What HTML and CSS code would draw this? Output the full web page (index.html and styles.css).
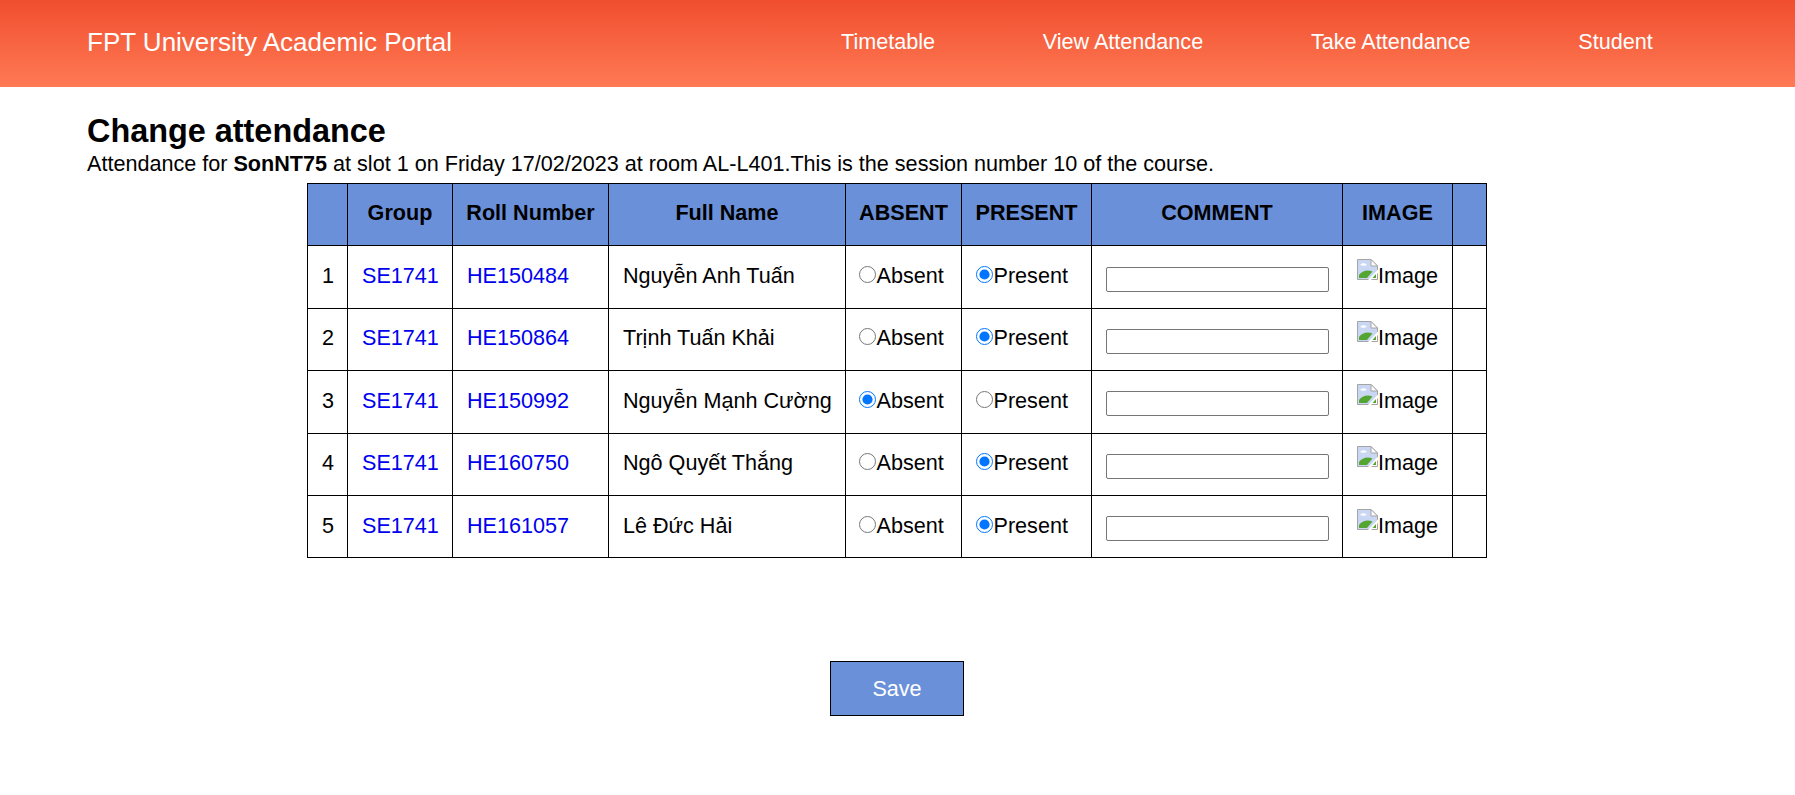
FILE: index.html
```html
<!DOCTYPE html>
<html lang="vi">
<head>
    <meta charset="UTF-8">
    <title>Change attendance</title>
    <link rel="stylesheet" href="styles.css">
</head>
<body>
    <svg class="sprite" width="0" height="0">
        <symbol id="broken" viewBox="0 0 21 21">
            <path d="M0.5 0.5H14L20.5 7V12L15 20.5H0.5Z" fill="#c9d7f4" stroke="#a4a4a4"/>
            <path d="M14 0.5V7H20.5Z" fill="#fff" stroke="#a4a4a4"/>
            <path d="M3 6C5 3.5 8 3.5 10 6C8 7 5 7 3 6Z" fill="#fff"/>
            <path d="M2 19V16C5 12 10 10.5 15.5 12.5L10 19Z" fill="#55a532"/>
            <path d="M11 21L21 10.5V21Z" fill="#fff"/>
            <path d="M15.5 19L19 15V19Z" fill="#55a532"/>
            <path d="M14.5 20.5H20.5V14.5" fill="none" stroke="#a4a4a4"/>
        </symbol>
    </svg>

    <header class="topbar">
        <div class="brand">FPT University Academic Portal</div>
        <nav class="menu">
            <a href="#">Timetable</a>
            <a href="#">View Attendance</a>
            <a href="#">Take Attendance</a>
            <a href="#">Student</a>
        </nav>
    </header>

    <main class="content">
        <h1>Change attendance</h1>
        <p class="info">Attendance for <b>SonNT75</b> at slot 1 on Friday 17/02/2023 at room AL-L401.This is the session number 10 of the course.</p>

        <form>
            <table class="sheet">
                <thead>
                    <tr>
                        <th class="c-no"></th>
                        <th class="c-group">Group</th>
                        <th class="c-roll">Roll Number</th>
                        <th class="c-name">Full Name</th>
                        <th class="c-absent">ABSENT</th>
                        <th class="c-present">PRESENT</th>
                        <th class="c-comment">COMMENT</th>
                        <th class="c-image">IMAGE</th>
                        <th class="c-extra"></th>
                    </tr>
                </thead>
                <tbody>
                    <tr>
                        <td class="center">1</td>
                        <td><a href="#">SE1741</a></td>
                        <td><a href="#">HE150484</a></td>
                        <td>Nguyễn Anh Tuấn</td>
                        <td class="pick"><input type="radio" name="s1"><span>Absent</span></td>
                        <td><input type="radio" name="s1" checked><span>Present</span></td>
                        <td><input type="text" class="note"></td>
                        <td><svg class="broken"><use href="#broken"/></svg>Image</td>
                        <td></td>
                    </tr>
                    <tr>
                        <td class="center">2</td>
                        <td><a href="#">SE1741</a></td>
                        <td><a href="#">HE150864</a></td>
                        <td>Trịnh Tuấn Khải</td>
                        <td class="pick"><input type="radio" name="s2"><span>Absent</span></td>
                        <td><input type="radio" name="s2" checked><span>Present</span></td>
                        <td><input type="text" class="note"></td>
                        <td><svg class="broken"><use href="#broken"/></svg>Image</td>
                        <td></td>
                    </tr>
                    <tr>
                        <td class="center">3</td>
                        <td><a href="#">SE1741</a></td>
                        <td><a href="#">HE150992</a></td>
                        <td>Nguyễn Mạnh Cường</td>
                        <td class="pick"><input type="radio" name="s3" checked><span>Absent</span></td>
                        <td><input type="radio" name="s3"><span>Present</span></td>
                        <td><input type="text" class="note"></td>
                        <td><svg class="broken"><use href="#broken"/></svg>Image</td>
                        <td></td>
                    </tr>
                    <tr>
                        <td class="center">4</td>
                        <td><a href="#">SE1741</a></td>
                        <td><a href="#">HE160750</a></td>
                        <td>Ngô Quyết Thắng</td>
                        <td class="pick"><input type="radio" name="s4"><span>Absent</span></td>
                        <td><input type="radio" name="s4" checked><span>Present</span></td>
                        <td><input type="text" class="note"></td>
                        <td><svg class="broken"><use href="#broken"/></svg>Image</td>
                        <td></td>
                    </tr>
                    <tr>
                        <td class="center">5</td>
                        <td><a href="#">SE1741</a></td>
                        <td><a href="#">HE161057</a></td>
                        <td>Lê Đức Hải</td>
                        <td class="pick"><input type="radio" name="s5"><span>Absent</span></td>
                        <td><input type="radio" name="s5" checked><span>Present</span></td>
                        <td><input type="text" class="note"></td>
                        <td><svg class="broken"><use href="#broken"/></svg>Image</td>
                        <td></td>
                    </tr>
                </tbody>
            </table>
            <div class="actions">
                <button type="button" class="save">Save</button>
            </div>
        </form>
    </main>
</body>
</html>
```

FILE: styles.css
```css
body {
    font-family: "Liberation Sans", Arial, sans-serif;
    font-size: 21.6px;
    margin: 0;
    color: #000;
    background-color: #fff;
}
.sprite {
    display: block;
}
.topbar {
    display: flex;
    align-items: center;
    height: 87px;
    padding-left: 87px;
    background: linear-gradient(180deg, #f04e2e, #ff7a55);
    color: #fff;
}
.brand {
    width: 701px;
    font-size: 26px;
    padding-bottom: 2px;
}
.menu {
    display: flex;
    gap: 107.7px;
    padding-left: 53px;
    padding-bottom: 4px;
}
.menu a {
    color: #fff;
    text-decoration: none;
}
.content {
    padding: 0 88px 0 87px;
}
h1 {
    font-size: 32.4px;
    margin: 0;
    padding-top: 26px;
    line-height: 37px;
}
.info {
    margin: 0;
    padding-top: 1px;
    line-height: 25px;
    height: 25px;
    padding-bottom: 7px;
}
.sheet {
    border-collapse: collapse;
    table-layout: fixed;
    width: 1180px;
    margin: 0 auto;
}
.sheet th, .sheet td {
    border: 1px solid #000;
    padding: 0 14px 2px;
    height: 59.4px;
    white-space: nowrap;
}
.sheet th {
    background-color: #6a90da;
    text-align: center;
    padding: 0 0 3px;
    height: 58.4px;
}
.sheet a {
    color: #0000ee;
    text-decoration: none;
}
.center {
    text-align: center;
}
.c-no { width: 39px; }
.c-group { width: 104px; }
.c-roll { width: 155px; }
.c-name { width: 236px; }
.c-absent { width: 115px; }
.c-present { width: 129px; }
.c-comment { width: 250px; }
.c-image { width: 109px; }
.c-extra { width: 33px; }

.sheet .pick {
    padding-left: 13px;
}
.sheet input[type="radio"] {
    margin: 0 0.5px 0 0;
    width: 17px;
    height: 17px;
    vertical-align: 0;
}
.note {
    width: 223px;
    height: 25px;
    box-sizing: border-box;
    margin: 0;
    padding: 1px 2px;
    border: 1px solid #767676;
    border-radius: 2px;
    vertical-align: -3px;
}
.broken {
    width: 21px;
    height: 21px;
    margin-top: -6px;
    vertical-align: 3px;
}
.actions {
    display: flex;
    justify-content: center;
    padding-top: 103px;
}
.save {
    width: 134px;
    height: 55px;
    font-family: inherit;
    font-size: 21.6px;
    color: #fff;
    background-color: #6a90da;
    border: 1px solid #000;
    padding: 0;
}
```
